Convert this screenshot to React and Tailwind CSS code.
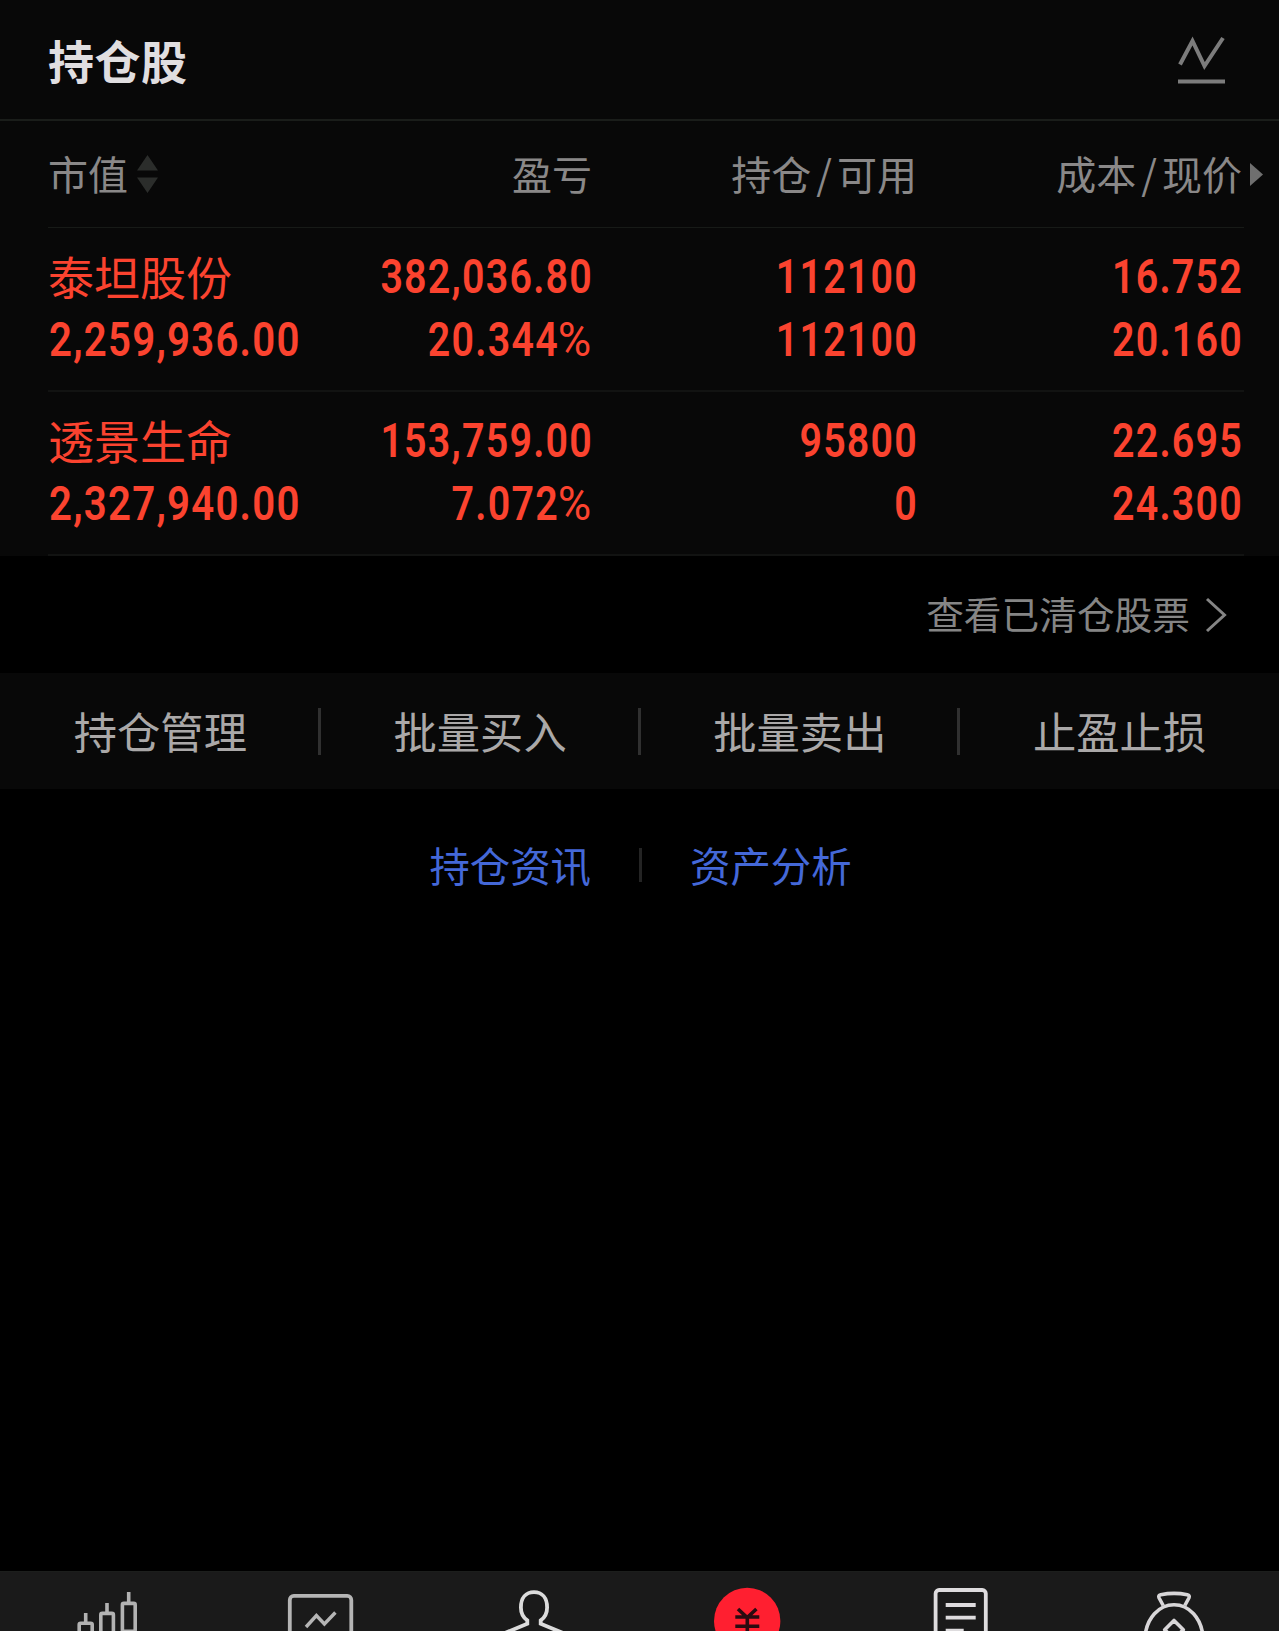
import React from "react";

const holdings = [
  {
    name: "泰坦股份",
    value: "2,259,936.00",
    profit: "382,036.80",
    rate: "20.344",
    amount: "112100",
    available: "112100",
    cost: "16.752",
    price: "20.160",
  },
  {
    name: "透景生命",
    value: "2,327,940.00",
    profit: "153,759.00",
    rate: "7.072",
    amount: "95800",
    available: "0",
    cost: "22.695",
    price: "24.300",
  },
];

const actions = ["持仓管理", "批量买入", "批量卖出", "止盈止损"];

function Num({ children }) {
  return (
    <div className="-mr-px origin-right scale-x-[0.82] whitespace-nowrap text-right font-[Roboto,sans-serif] text-[48px] font-semibold leading-[63px] tracking-[1.5px]">
      {children}
    </div>
  );
}

function Slash() {
  return <span className="px-[5px]">/</span>;
}

function HoldingRow({ item }) {
  return (
    <div className="ml-12 mr-[35px] h-[164px] border-b-2 border-[#121312] pr-[2px] pt-[17px] text-[#fb432f]">
      <div className="grid grid-cols-[270px_274px_325px_1fr]">
        <div>
          <div className="whitespace-nowrap pb-[2px] text-[46px] leading-[60px]">{item.name}</div>
          <div className="ml-px origin-left scale-x-[0.82] whitespace-nowrap font-[Roboto,sans-serif] text-[49px] font-semibold leading-[66px] tracking-[1.5px]">
            {item.value}
          </div>
        </div>
        <div>
          <Num>{item.profit}</Num>
          <Num>
            {item.rate}
            <span className="inline-block origin-right scale-x-[1.16] pl-[5px] font-normal">%</span>
          </Num>
        </div>
        <div>
          <Num>{item.amount}</Num>
          <Num>{item.available}</Num>
        </div>
        <div>
          <Num>{item.cost}</Num>
          <Num>{item.price}</Num>
        </div>
      </div>
    </div>
  );
}

function TabBar() {
  return (
    <div className="flex h-[60px] justify-between overflow-hidden border-t border-[#1c1e1c] bg-[#1a1a1a]">
      {/* Market */}
      <svg className="h-[60px] w-[213px]" viewBox="0 1 213 60" fill="none" stroke="#b2b2b2" strokeWidth="3.6">
        <path d="M85.7 42v9M107 32v9M128.7 21v10" />
        <rect x="79.2" y="52.2" width="13" height="22" rx="1.5" />
        <rect x="100.8" y="42.4" width="12.6" height="30" rx="1.5" />
        <rect x="122.4" y="32.4" width="12.8" height="28" rx="1.5" />
      </svg>
      {/* Watchlist */}
      <svg className="h-[60px] w-[213px]" viewBox="213 1 213 60" fill="none" stroke="#b5b5b5" strokeWidth="3.8">
        <rect x="289.8" y="24.9" width="61.5" height="54" rx="4" />
        <path d="M306 56l10.4-11.5 8 8.5 11-11.5" strokeWidth="3.4" />
      </svg>
      {/* Account */}
      <svg className="h-[60px] w-[213px]" viewBox="426 1 213 60" fill="none" stroke="#dcdcdc" strokeWidth="3.8">
        <path d="M500 64l27.3-11.2V49.4C523 46.4 520.9 42 520.9 36.5c0-9.5 5-15.3 13.1-15.3s13.1 5.8 13.1 15.3c0 5.5-2.1 9.9-6.4 12.9v3.4L568 64" />
      </svg>
      {/* Trade */}
      <svg className="h-[60px] w-[213px]" viewBox="640 1 213 60" fill="none" stroke="#2a0b10" strokeWidth="3.6">
        <circle cx="747.2" cy="50" r="33.2" fill="#ff1f30" stroke="none" />
        <path d="M738 38l9.2 8.5 9.2-8.5M735.3 46h24M735.3 55.3h24M747.3 45v20" />
      </svg>
      {/* Orders */}
      <svg className="h-[60px] w-[213px]" viewBox="853 1 213 60" fill="none" stroke="#dedcde" strokeWidth="3.8">
        <rect x="935.6" y="19" width="50.2" height="60" rx="3.5" />
        <path d="M945.7 34h30M945.7 46.7h30M945.7 59.6h18" />
      </svg>
      {/* Wealth */}
      <svg className="h-[60px] w-[213px]" viewBox="1066 1 213 60" fill="none" stroke="#d8d6d8" strokeWidth="3.6" strokeLinejoin="round">
        <path d="M1163.2 34.5l-4.1-7.5c-.8-1.7-.2-2.9 1.6-3.3 8.7-1.7 18-1.7 26.6 0 1.8.4 2.4 1.6 1.6 3.3l-4.1 7.5" />
        <path d="M1145 66c1.5-19 14-32.2 29-32.2S1201.5 47 1203 66" />
        <path d="M1174 49.5l-9.3 9.2L1174 68l9.3-9.3z" />
      </svg>
    </div>
  );
}

export default function App() {
  return (
    <div className="flex h-[1631px] w-[1279px] flex-col overflow-hidden bg-black font-['Noto_Sans_CJK_SC',sans-serif]">
      <div className="bg-[#080808]">
        {/* Title */}
        <div className="flex h-[121px] items-center justify-between border-b-2 border-[#1a1d1a] pl-12 pr-[53px]">
          <h1 className="pb-px text-[46px] font-bold leading-none tracking-[0.5px] text-[#e0dee0]">持仓股</h1>
          <svg className="h-[50px] w-[50px]" viewBox="0 0 50 50" fill="none" stroke="#7c7c7c" strokeWidth="4">
            <path d="M4 29.5L16.5 6l12 25L47 3M2 46.5h47" />
          </svg>
        </div>

        {/* Column headers */}
        <div className="ml-12 mr-[35px] grid h-[107px] grid-cols-[270px_274px_325px_1fr] items-center border-b border-[#171a17] pr-[2px] text-right text-[40px] leading-none text-[#8a8888]">
          <div className="flex items-center gap-[9px]">
            <span className="pb-[2px]">市值</span>
            <svg className="h-[38px] w-[21px]" viewBox="0 0 21 38" fill="#2b2d2b">
              <path d="M10.5 0L21 15.5H0zM0 22.5h21L10.5 38z" />
            </svg>
          </div>
          <div className="pb-[2px]">盈亏</div>
          <div className="pb-[2px]">持仓<Slash />可用</div>
          <div className="-mr-[21px] flex items-center justify-end gap-2">
            <span className="whitespace-nowrap pb-[2px]">成本<Slash />现价</span>
            <svg className="h-[23px] w-[13px]" viewBox="0 0 13 23" fill="#6f6f6f">
              <path d="M0 0l13 11.5L0 23z" />
            </svg>
          </div>
        </div>

        {holdings.map((item) => (
          <HoldingRow key={item.name} item={item} />
        ))}
      </div>

      <div className="flex h-[117px] items-center justify-end gap-[15px] pr-[52px] text-[37.7px] leading-none text-[#858585]">
        <span className="pb-[3px]">查看已清仓股票</span>
        <svg className="h-[36px] w-[22px]" viewBox="0 0 22 36" fill="none" stroke="#858585" strokeWidth="3">
          <path d="M2 2l17.5 16L2 34" />
        </svg>
      </div>

      {/* Batch actions */}
      <div className="flex h-[116px] items-center bg-[#080808] text-[43.3px] leading-none text-[#aaa8a8]">
        {actions.map((label, i) => (
          <React.Fragment key={label}>
            {i > 0 && <div className="-ml-[2px] -mr-px h-[47px] w-[3px] bg-[#303030]" />}
            <button className="flex-1 pl-px">{label}</button>
          </React.Fragment>
        ))}
      </div>

      <div className="flex items-center justify-center gap-12 pl-[2px] pt-[52px] text-[40.4px] leading-[48px] text-[#4468d8]">
        <span>持仓资讯</span>
        <div className="h-[34px] w-[3px] bg-[#242424]" />
        <span>资产分析</span>
      </div>

      <div className="flex-1" />
      <TabBar />
    </div>
  );
}
